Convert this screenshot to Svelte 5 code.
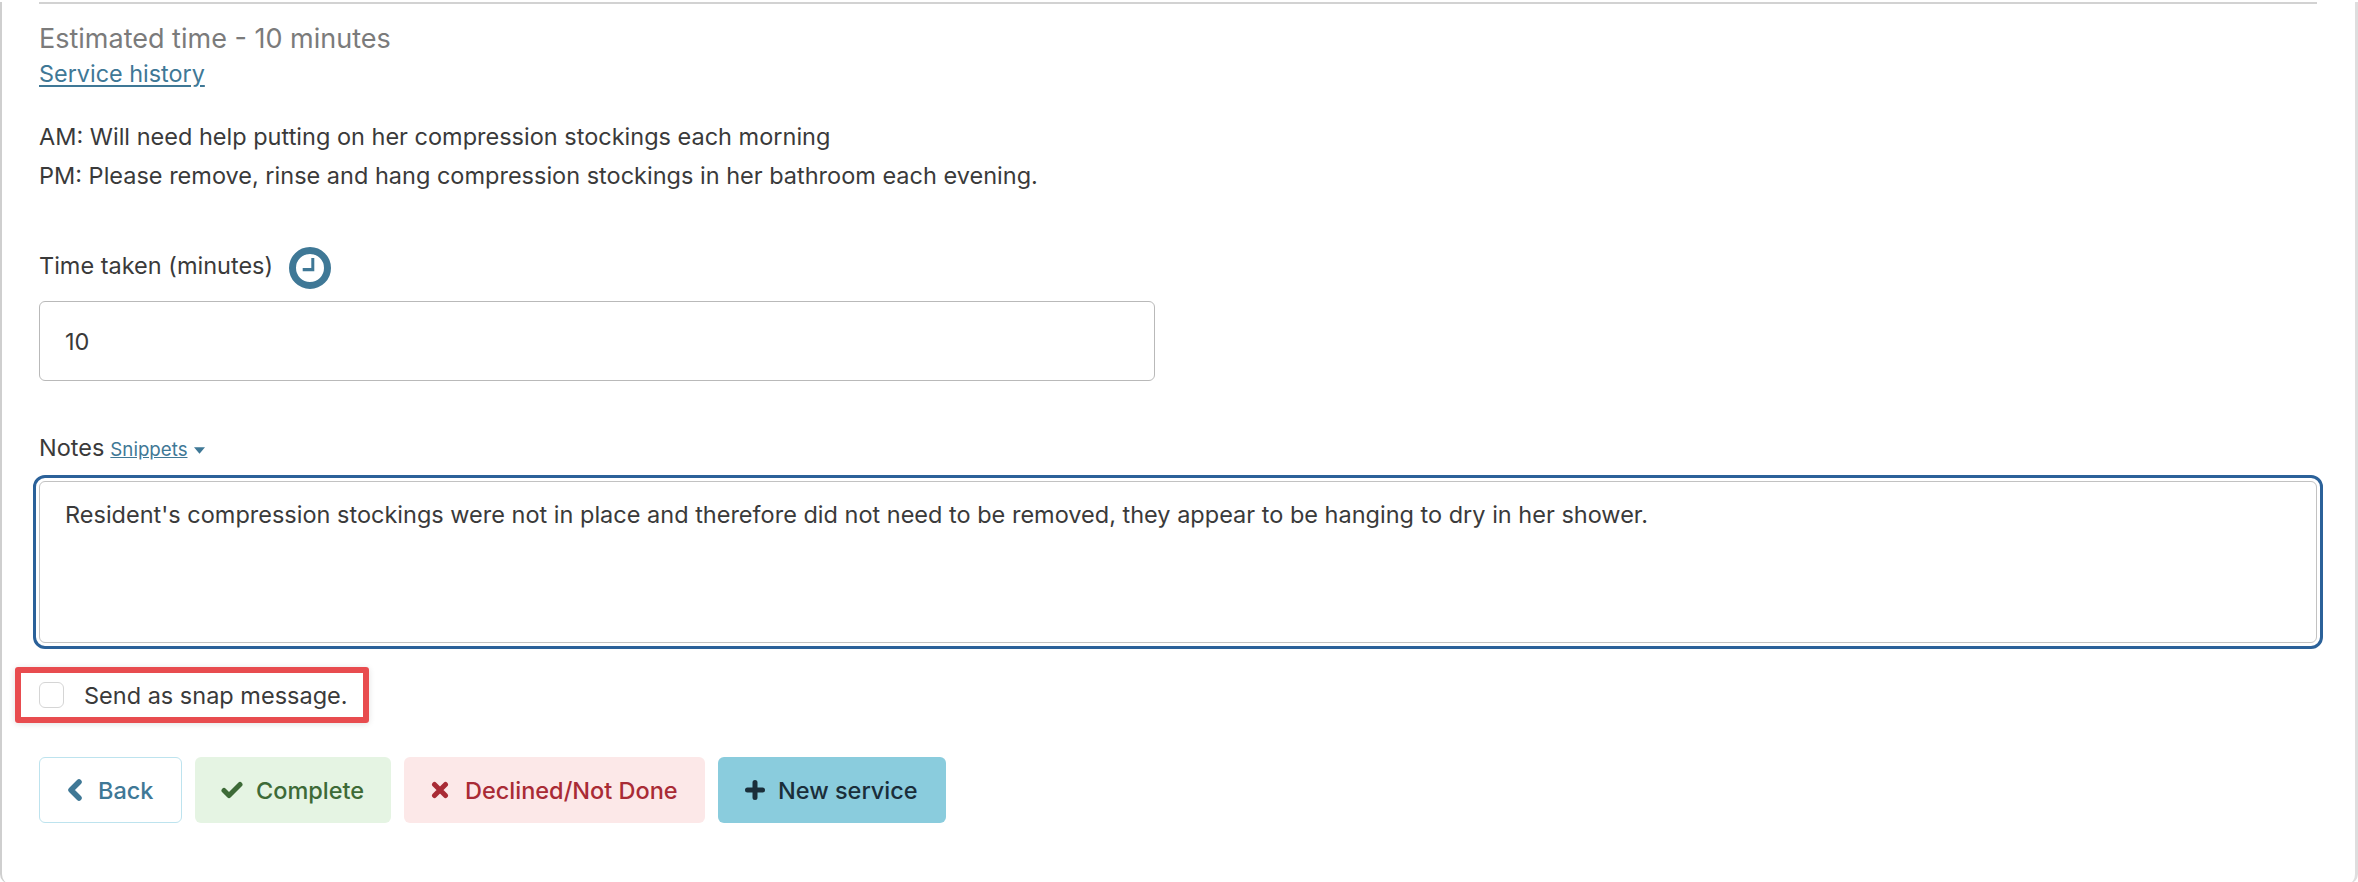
<script>
  let minutes = '10';
  let notes = "Resident's compression stockings were not in place and therefore did not need to be removed, they appear to be hanging to dry in her shower.";
</script>

<div class="panel">
  <hr />
  <div class="estimate">Estimated time - 10 minutes</div>
  <a class="history" href="#history">Service history</a>

  <div class="instructions">
    <p>AM: Will need help putting on her compression stockings each morning</p>
    <p>PM: Please remove, rinse and hang compression stockings in her bathroom each evening.</p>
  </div>

  <div class="time-label">
    <span>Time taken (minutes)</span>
    <svg class="clock" viewBox="0 0 42 42" width="42" height="42" aria-hidden="true">
      <circle cx="21" cy="21" r="17.5" fill="none" stroke="#3f7896" stroke-width="7" />
      <path d="M25.3 11v13.3H13.7V21h8.6V11z" fill="#3f7896" />
    </svg>
  </div>
  <input class="time-input" type="text" bind:value={minutes} />

  <div class="notes-label">
    <span>Notes</span>
    <a class="snippets" href="#snippets">Snippets</a>
    <svg class="caret" viewBox="0 0 10 6" width="11" height="7" aria-hidden="true"><path d="M0 0h10L5 6z" fill="#3f7896" /></svg>
  </div>
  <div class="focus-ring">
    <textarea class="notes-input" bind:value={notes}></textarea>
  </div>

  <label class="snap">
    <input type="checkbox" />
    <span>Send as snap message.</span>
  </label>

  <div class="actions">
    <button class="btn back">
      <svg viewBox="0 0 16 22" width="16" height="22" aria-hidden="true"><path d="M12 3 4 11l8 8" fill="none" stroke="currentColor" stroke-width="5.5" stroke-linejoin="round" stroke-linecap="round" /></svg>
      Back
    </button>
    <button class="btn complete">
      <svg viewBox="0 0 22 18" width="22" height="18" aria-hidden="true"><path d="M3 9.5 8 14.5 19 3.5" fill="none" stroke="currentColor" stroke-width="5" stroke-linejoin="round" stroke-linecap="round" /></svg>
      Complete
    </button>
    <button class="btn declined">
      <svg viewBox="0 0 18 18" width="18" height="18" aria-hidden="true"><path d="M3.5 3.5l11 11M14.5 3.5l-11 11" fill="none" stroke="currentColor" stroke-width="5" stroke-linecap="round" /></svg>
      Declined/Not Done
    </button>
    <button class="btn new">
      <svg viewBox="0 0 20 20" width="20" height="20" aria-hidden="true"><path d="M10 2.5v15M2.5 10h15" fill="none" stroke="currentColor" stroke-width="5" stroke-linecap="round" /></svg>
      New service
    </button>
  </div>
</div>

<style>
  :global(body) {
    margin: 0;
    background: #fff;
  }

  .panel {
    box-sizing: border-box;
    width: 2358px;
    height: 882px;
    padding: 0 38px 0 37px;
    border-left: 2px solid #cfcfcf;
    border-right: 3px solid #dedede;
    border-radius: 0 0 10px 10px;
    font-family: Inter, sans-serif;
    font-size: 23.5px;
    color: #3a3a3a;
  }

  hr {
    margin: 2px 0 0;
    border: 0;
    border-top: 2px solid #d2d2d2;
  }

  .estimate {
    margin-top: 19px;
    font-size: 27px;
    line-height: 32px;
    color: #7b7b7b;
  }

  .history {
    display: block;
    width: fit-content;
    margin-top: 4px;
    font-size: 23.4px;
    line-height: 30px;
    color: #3f7896;
    text-decoration: underline;
    text-underline-offset: 3px;
  }

  .instructions {
    margin-top: 34px;
  }

  .instructions p {
    margin: 0 0 12px;
    line-height: 27px;
  }

  .time-label {
    display: flex;
    align-items: center;
    gap: 16px;
    margin-top: 58px;
    line-height: 37px;
  }

  .time-label span {
    margin-bottom: 5px;
  }

  .time-input {
    display: block;
    box-sizing: border-box;
    width: 1116px;
    height: 80px;
    margin-top: 12px;
    padding: 0 25px;
    border: 1.5px solid #b9b9b9;
    border-radius: 6px;
    font: inherit;
    color: inherit;
    outline: none;
  }

  .notes-label {
    display: flex;
    align-items: baseline;
    gap: 6px;
    margin-top: 52px;
    line-height: 30px;
  }

  .snippets {
    font-size: 18.7px;
    color: #3f7896;
    text-decoration: underline;
  }

  .caret {
    align-self: center;
    margin-top: 2px;
  }

  .focus-ring {
    margin: 10px -6px 0;
    padding: 3px;
    border: 3px solid #2b6199;
    border-radius: 12px;
  }

  .notes-input {
    display: block;
    box-sizing: border-box;
    width: 100%;
    height: 162px;
    padding: 19px 25px;
    border: 1.5px solid #c2c2c2;
    border-radius: 6px;
    font: inherit;
    line-height: 27px;
    color: inherit;
    outline: none;
    resize: none;
  }

  .snap {
    display: flex;
    align-items: center;
    gap: 20px;
    box-sizing: border-box;
    width: 354px;
    height: 56px;
    margin: 18px 0 0 -24px;
    padding-left: 18px;
    border: 6px solid #e84c4f;
    border-radius: 3px;
    box-shadow: 0 1px 6px rgba(0, 0, 0, 0.12);
  }

  .snap input {
    appearance: none;
    box-sizing: border-box;
    width: 25px;
    height: 26px;
    margin: 0;
    border: 1.5px solid #d5d5d5;
    border-radius: 6px;
    background: #fff;
  }

  .actions {
    display: flex;
    gap: 13px;
    margin-top: 34px;
  }

  .btn {
    display: flex;
    align-items: center;
    gap: 13px;
    box-sizing: border-box;
    height: 66px;
    padding: 0 0 0 26px;
    border: 1.5px solid transparent;
    border-radius: 6px;
    font: inherit;
    font-weight: 500;
    white-space: nowrap;
  }

  .btn svg {
    flex: none;
  }

  .back {
    width: 143px;
    padding-left: 27px;
    gap: 15px;
    background: #fff;
    border-color: #bde3ee;
    color: #3f7896;
  }

  .complete {
    width: 196px;
    padding-left: 25px;
    background: #e5f4e3;
    color: #3d6a37;
  }

  .declined {
    width: 301px;
    gap: 16px;
    background: #fce8e8;
    color: #a92b35;
  }

  .new {
    width: 228px;
    background: #8accdd;
    color: #1a2e3a;
  }
</style>
